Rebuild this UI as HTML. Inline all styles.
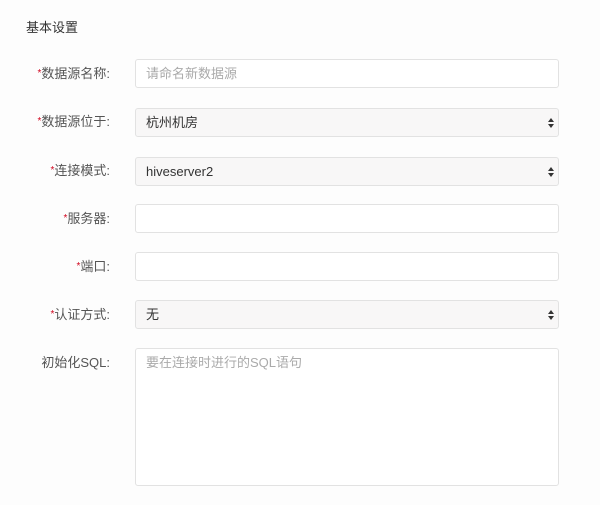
<!DOCTYPE html>
<html><head><meta charset="utf-8"><style>
body{margin:0;width:600px;height:505px;background:#fdfdfd;font-family:"Liberation Sans","Noto Sans CJK SC",sans-serif;font-size:13px;color:#333;position:relative;overflow:hidden}
.t{position:absolute;left:26px;top:17px;font-size:13px;color:#333}
.l{position:absolute;right:490px;width:110px;text-align:right;color:#555;font-size:13px;line-height:16px}
.l b{color:#d0021b;font-weight:normal;font-size:10px;vertical-align:top}
.f{position:absolute;left:135px;width:424px;height:29px;border:1px solid #e2e2e2;border-radius:3px;background:#fff;box-sizing:border-box;padding-left:10px;line-height:27px}
.s{background:#f8f7f7}
.ph{color:#aaa}
.ar{position:absolute;right:4px;top:9px;width:6px}
</style></head><body>
<div class="t">基本设置</div>
<div class="l" style="top:66px"><b>*</b>数据源名称:</div>
<div class="f" style="top:59px"><span class="ph">请命名新数据源</span></div>
<div class="l" style="top:114px"><b>*</b>数据源位于:</div>
<div class="f s" style="top:108px">杭州机房<svg class="ar" viewBox="0 0 6 10" height="10"><path d="M0 4L3 0L6 4Z M0 6L3 10L6 6Z" fill="#333"/></svg></div>
<div class="l" style="top:163px"><b>*</b>连接模式:</div>
<div class="f s" style="top:157px">hiveserver2<svg class="ar" viewBox="0 0 6 10" height="10"><path d="M0 4L3 0L6 4Z M0 6L3 10L6 6Z" fill="#333"/></svg></div>
<div class="l" style="top:211px"><b>*</b>服务器:</div>
<div class="f" style="top:204px"></div>
<div class="l" style="top:259px"><b>*</b>端口:</div>
<div class="f" style="top:252px"></div>
<div class="l" style="top:307px"><b>*</b>认证方式:</div>
<div class="f s" style="top:300px">无<svg class="ar" viewBox="0 0 6 10" height="10"><path d="M0 4L3 0L6 4Z M0 6L3 10L6 6Z" fill="#333"/></svg></div>
<div class="l" style="top:355px">初始化SQL:</div>
<div class="f" style="top:348px;height:138px;line-height:28px"><span class="ph">要在连接时进行的SQL语句</span></div>
</body></html>
